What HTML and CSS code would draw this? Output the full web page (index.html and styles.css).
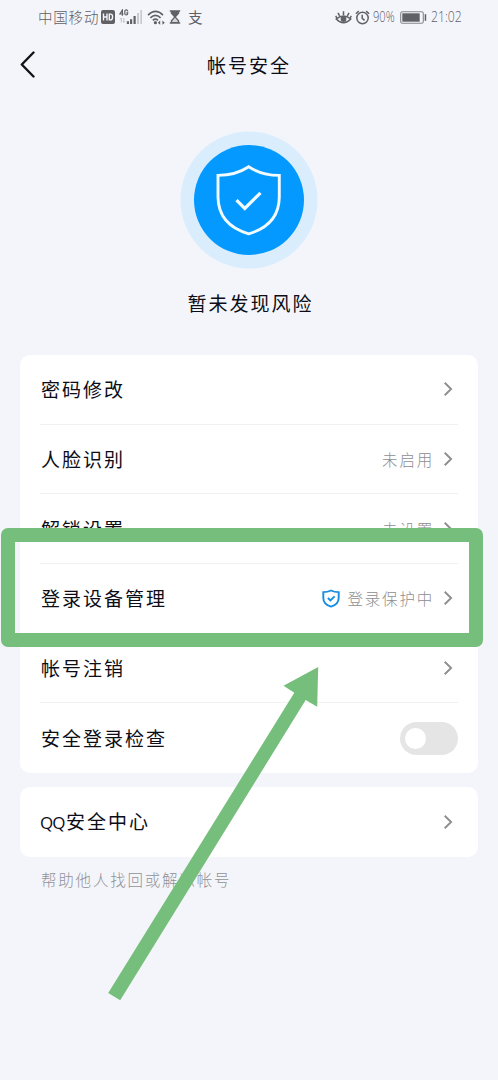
FILE: index.html
```html
<!DOCTYPE html>
<html lang="zh-CN">
<head>
<meta charset="utf-8">
<title>帐号安全</title>
<link rel="stylesheet" href="styles.css">
</head>
<body>
<svg class="defs" width="0" height="0">
  <symbol id="chevron" viewBox="0 0 10 16"><path d="M1.7 1.8 8.1 8 1.7 14.2" fill="none" stroke="currentColor" stroke-width="1.9"/></symbol>
</svg>
<main class="screen">
  <div class="status">
    <div class="status-left">
      <span class="carrier">中国移动</span>
      <svg class="hd" width="14" height="14" viewBox="0 0 14 14"><rect width="14" height="14" rx="2" fill="#606165"/><path d="M2.5 3.5v7M6 3.5v7M2.5 7H6M8.3 4.1v5.8h1.1q2.1 0 2.1-2.1V6.2q0-2.1-2.1-2.1z" fill="none" stroke="#f4f5fa" stroke-width="1.4"/></svg>
      <svg class="signal" width="24" height="16" viewBox="0 0 24 16">
        <path d="M3.4 6.7V1L.9 5h3.6M8.8 2.4Q8.5.9 7.2.9 5.8.9 5.8 2.6v1.6q0 1.8 1.4 1.8 1.5 0 1.5-1.7V3.9H7.3" fill="none" stroke="#606165" stroke-width="1.2"/>
        <path d="M2.3 9v4.5M1.2 10.2l1.1-1.2M4.8 9v4.5l1.1-1.2" fill="none" stroke="#b7b8bd" stroke-width=".9"/>
        <path d="M7.8 12.3h2.2V15H7.8zM11 10.3h2.2V15H11zM14.5 7h2.2v8h-2.2z" fill="#606165"/>
        <path d="M18 4h2v11h-2zM21.3 1h1.7v14h-1.7z" fill="#c9cad0"/>
      </svg>
      <svg class="wifi" width="18" height="15" viewBox="0 0 18 15"><path d="M1 5.1Q8.5-2.2 16 5.1M3.4 7.9Q8.5 2.9 13.6 7.9M5.8 10.3Q8.5 8 11 10.3" fill="none" stroke="#606165" stroke-width="1.6"/><circle cx="8.4" cy="12.7" r="1.6" fill="#606165"/><path d="m10.8 12.7 2.4-2.1v4.2zM17.8 12.7l-2.4-2.1v4.2z" fill="#606165"/></svg>
      <svg class="glass" width="12" height="14" viewBox="0 0 12 14"><path d="M.8.9h10.4M.8 13.1h10.4" stroke="#606165" stroke-width="1.5"/><path d="M1.8 1h8.4v2.5L7 7l3.2 3.5V13H1.8v-2.5L5 7 1.8 3.5z" fill="#606165"/><path d="M6 7.8 8.8 11v1H3.2v-1z" fill="#d4d5da"/></svg>
      <span class="pay">支</span>
    </div>
    <div class="status-right">
      <svg width="17" height="15" viewBox="0 0 17 15"><path d="M1.2 9Q8.5 3 15.8 9 8.5 16.5 1.2 9zM8.5 5V1.2M4.6 5.8 3 2.8M12.4 5.8 14 2.8M1.9 8 .7 5.9M15.1 8l1.2-2.1" fill="none" stroke="#606165" stroke-width="1.5"/><circle cx="8.5" cy="9" r="2.9" fill="#606165"/></svg>
      <svg width="15" height="15" viewBox="0 0 15 15"><circle cx="7.5" cy="8" r="5.7" fill="none" stroke="#606165" stroke-width="1.5"/><path d="M7.2 4.7v3.6l2.4 2M.9 3.8 3.8 1.1M11.2 1.1l2.9 2.7" fill="none" stroke="#606165" stroke-width="1.5"/></svg>
      <span class="percent">90%</span>
      <svg class="battery" width="27" height="13" viewBox="0 0 27 13"><rect x=".7" y=".7" width="22.6" height="11.6" rx="1.8" fill="none" stroke="#85868a" stroke-width="1.1"/><path d="M2.3 2.3h17.4v8.4H2.3z" fill="#606165"/><path d="M24.7 3.2h1.5v6.6h-1.5z" fill="#606165"/></svg>
      <span class="clock">21:02</span>
    </div>
  </div>
  <header class="nav">
    <svg class="back" width="15" height="27" viewBox="0 0 15 27"><path d="M13.5 1.5 1.8 13.5l11.7 12" fill="none" stroke="#12131a" stroke-width="2.4" stroke-linecap="round" stroke-linejoin="round"/></svg>
    <h1 class="title">帐号安全</h1>
  </header>
  <section class="hero">
    <svg width="138" height="138" viewBox="0 0 138 138"><circle cx="69" cy="69" r="68.5" fill="#d9edfc"/><circle cx="69" cy="69" r="55" fill="#0499ff"/><path d="M68.7 35.8Q82 44.5 99.3 44.4V66Q99 94 68.7 102.8 38.3 94 38 66V44.4Q55.5 44.5 68.7 35.8z" fill="none" stroke="#f2fbff" stroke-width="2.9"/><path d="m56.5 69.2 8.3 8.3L80.5 61.8" fill="none" stroke="#f2fbff" stroke-width="3.2"/></svg>
    <p class="hero-text">暂未发现风险</p>
  </section>
  <section class="card">
    <div class="row"><span class="label">密码修改</span><svg class="chev"><use href="#chevron"/></svg></div>
    <div class="row"><span class="label">人脸识别</span><span class="value">未启用</span><svg class="chev"><use href="#chevron"/></svg></div>
    <div class="row"><span class="label">解锁设置</span><span class="value">未设置</span><svg class="chev"><use href="#chevron"/></svg></div>
    <div class="row"><span class="label">登录设备管理</span>
      <svg class="mini" width="18" height="19" viewBox="0 0 18 19"><path d="M9 1.5Q12.3 3.1 16.7 3.1V9Q16.6 15.3 9 17.7 1.4 15.3 1.3 9V3.1Q5.7 3.1 9 1.5z" fill="none" stroke="#168de2" stroke-width="1.9"/><path d="m5.9 9 2.5 2.5 4.2-4.2" fill="none" stroke="#168de2" stroke-width="1.9"/></svg>
      <span class="value">登录保护中</span><svg class="chev"><use href="#chevron"/></svg></div>
    <div class="row"><span class="label">帐号注销</span><svg class="chev"><use href="#chevron"/></svg></div>
    <div class="row"><span class="label">安全登录检查</span><span class="switch"><span class="knob"></span></span></div>
  </section>
  <section class="card card-single">
    <div class="row"><span class="label label-qq"><span class="latin">QQ</span>安全中心</span><svg class="chev"><use href="#chevron"/></svg></div>
  </section>
  <p class="note">帮助他人找回或解冻帐号</p>
  <div class="highlight"></div>
  <svg class="arrow" width="498" height="1080" viewBox="0 0 498 1080"><path d="M318.2 667 283.5 685.7l10.8 7L108.2 993l12 7.2L305.7 700l11.5 6.8z" fill="#76be7b"/></svg>
</main>
</body>
</html>
```
FILE: styles.css
```css
* { box-sizing: border-box; }
body {
  margin: 0;
  background: #f4f5fa;
  font-family: "Noto Sans CJK SC", sans-serif;
  color: #0c0d16;
}
svg { display: block; flex: none; }
.defs { position: absolute; }
.screen {
  position: relative;
  width: 498px;
  height: 1080px;
  overflow: hidden;
}
.status {
  display: flex;
  justify-content: space-between;
  align-items: center;
  height: 34px;
  padding: 0 35px 0 38px;
  color: #606165;
  font-size: 14.5px;
  line-height: 20px;
  font-weight: 300;
  white-space: nowrap;
}
.status-left, .status-right { display: flex; align-items: center; }
.carrier { width: 63px; letter-spacing: .8px; }
.signal { margin-left: 4px; }
.wifi { margin-left: 4px; }
.glass { margin-left: 4px; }
.pay { margin-left: 7px; font-weight: 400; }
.status-right { gap: 3px; }
.percent, .clock {
  font-family: "Open Sans", sans-serif;
  font-size: 14px;
  transform-origin: left center;
}
.percent { width: 23px; transform: scaleX(.79); }
.battery { margin-left: 1px; }
.clock { width: 32px; margin-left: 1px; transform: scaleX(.87); }
.nav {
  display: grid;
  grid-template-columns: 40px 1fr 40px;
  align-items: center;
  height: 61px;
  padding: 0 20px;
}
.title {
  margin: 0;
  font-size: 19px;
  line-height: 28px;
  font-weight: 400;
  letter-spacing: 2px;
  text-align: center;
}
.hero {
  display: flex;
  flex-direction: column;
  align-items: center;
  height: 260px;
  padding-top: 36px;
}
.hero-text {
  margin: 20px 0 0;
  font-size: 19px;
  line-height: 28px;
  letter-spacing: 2px;
  text-indent: 3px;
}
.card {
  height: 417.6px;
  margin: 0 20px;
  padding: 0 20px;
  border-radius: 10px;
  background: #fff;
}
.row {
  display: flex;
  align-items: center;
  height: 69.7px;
  border-bottom: 1px solid #f0f1f3;
}
.row:last-child { border-bottom: 0; }
.label {
  margin-right: auto;
  padding-left: 1px;
  font-size: 19px;
  line-height: 28px;
  letter-spacing: 2px;
}
.label-qq { padding-left: 0; }
.latin {
  display: inline-block;
  width: 26px;
  font-family: "Open Sans", sans-serif;
  font-size: 17px;
  letter-spacing: -1px;
}
.value {
  color: #8e8e90;
  font-size: 15.5px;
  line-height: 24px;
  font-weight: 300;
  letter-spacing: 1.8px;
}
.mini { margin-right: 7px; }
.chev {
  width: 10px;
  height: 16px;
  margin: 0 5px 0 9px;
  color: #8e8e91;
}
.switch {
  display: flex;
  align-items: center;
  width: 58px;
  height: 33px;
  padding-left: 5px;
  border-radius: 17px;
  background: #e5e5e5;
}
.knob {
  width: 21px;
  height: 21px;
  border-radius: 50%;
  background: #fff;
}
.card-single { height: 70px; margin-top: 14.4px; }
.note {
  margin: 10px 0 0 41px;
  color: #929397;
  font-size: 15.5px;
  line-height: 24px;
  font-weight: 300;
  letter-spacing: 1.8px;
}
.highlight {
  position: absolute;
  left: 1px;
  top: 528px;
  width: 482px;
  height: 119px;
  border: 14px solid #76be7b;
  border-radius: 7px;
}
.arrow { position: absolute; left: 0; top: 0; }
```
